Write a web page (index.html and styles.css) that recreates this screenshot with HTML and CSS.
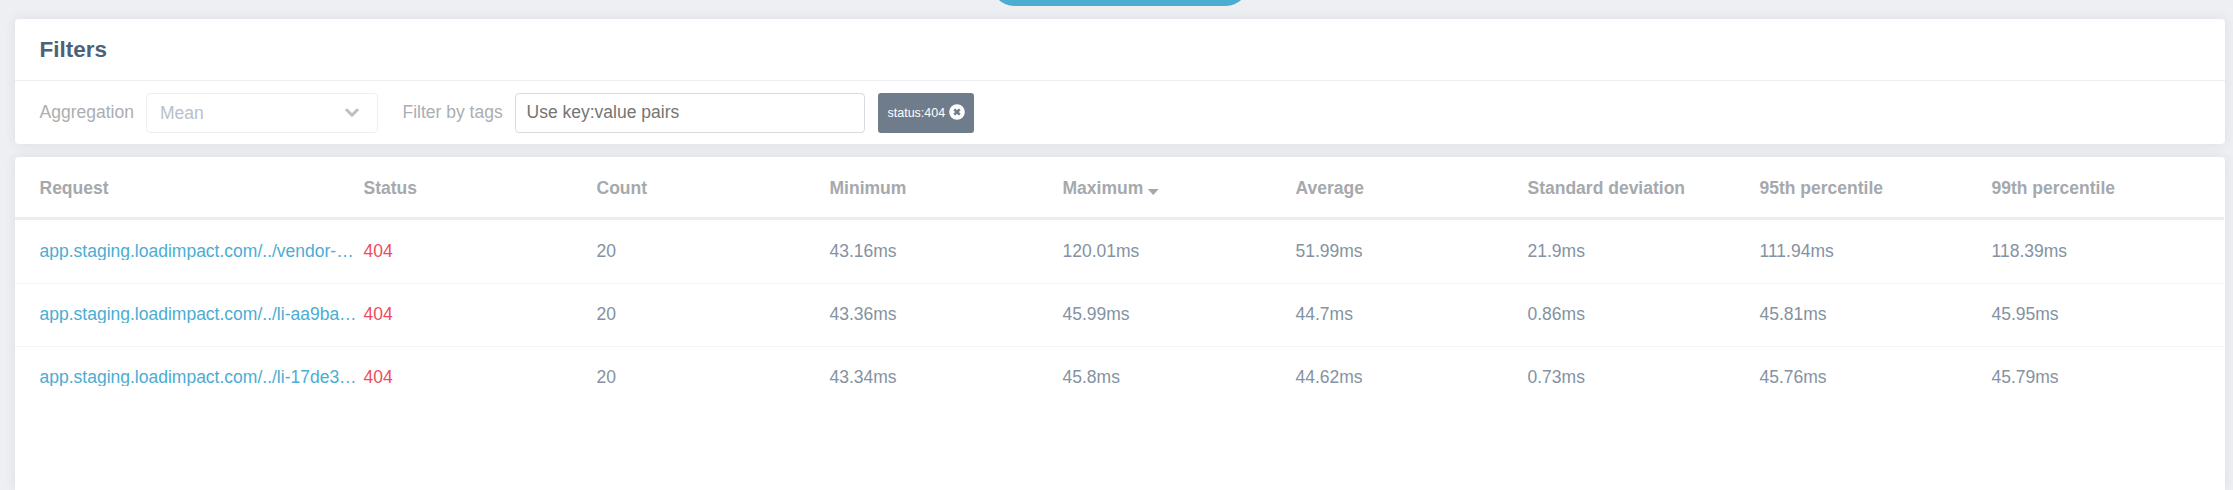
FILE: index.html
```html
<!DOCTYPE html>
<html lang="en">
<head>
<meta charset="utf-8">
<title>Requests</title>
<link rel="stylesheet" href="styles.css">
</head>
<body>
<div class="pill"></div>
<section class="card filters">
  <h2 class="title">Filters</h2>
  <div class="controls">
    <span class="label">Aggregation</span>
    <div class="select"><span>Mean</span>
      <svg class="chevron" width="15" height="10" viewBox="0 0 15 10"><path d="M1.800 2 7 7.200 12.200 2" fill="none" stroke="#b9c0c9" stroke-width="3" stroke-linecap="round"/></svg>
    </div>
    <span class="label tags">Filter by tags</span>
    <input class="input" type="text" placeholder="Use key:value pairs">
    <div class="chip"><span>status:404</span>
      <svg class="close" width="16" height="16" viewBox="0 0 16 16"><circle cx="8" cy="8" r="7.800" fill="#fff"/><path d="M5.300 5.300 10.700 10.700M10.700 5.300 5.300 10.700" stroke="#6e7c8c" stroke-width="2.600"/></svg>
    </div>
  </div>
</section>
<section class="card results">
  <div class="row head"><span>Request</span><span>Status</span><span>Count</span><span>Minimum</span><span>Maximum<i class="caret"></i></span><span>Average</span><span>Standard deviation</span><span>95th percentile</span><span>99th percentile</span></div>
  <div class="row"><a class="link">app.staging.loadimpact.com/../vendor-…</a><span class="error">404</span><span>20</span><span>43.16ms</span><span>120.01ms</span><span>51.99ms</span><span>21.9ms</span><span>111.94ms</span><span>118.39ms</span></div>
  <div class="row"><a class="link">app.staging.loadimpact.com/../li-aa9ba…</a><span class="error">404</span><span>20</span><span>43.36ms</span><span>45.99ms</span><span>44.7ms</span><span>0.86ms</span><span>45.81ms</span><span>45.95ms</span></div>
  <div class="row"><a class="link">app.staging.loadimpact.com/../li-17de3…</a><span class="error">404</span><span>20</span><span>43.34ms</span><span>45.8ms</span><span>44.62ms</span><span>0.73ms</span><span>45.76ms</span><span>45.79ms</span></div>
</section>
</body>
</html>
```
FILE: styles.css
```css
* { box-sizing: border-box; }
body {
  margin: 0;
  height: 490px;
  padding: 0 8px 0 15px;
  overflow: hidden;
  display: flex;
  flex-direction: column;
  background: #eeeff3;
  color: #8492a1;
  font: 17.5px/20px "Liberation Sans", Arial, sans-serif;
}
.pill {
  flex: none;
  width: 256px;
  height: 50px;
  margin: -44px 0 13px 976.5px;
  border-radius: 22px;
  background: #4badd1;
}
.card {
  flex: none;
  background: #fff;
  border-radius: 4px;
  box-shadow: 0 0 12px rgba(50, 60, 80, 0.09);
}
.filters { height: 125px; margin-bottom: 13px; }
.title {
  height: 62px;
  margin: 0;
  padding: 0 24.5px;
  border-bottom: 1px solid #ecedf2;
  color: #4e6177;
  font-size: 22.5px;
  line-height: 61px;
}
.controls {
  display: flex;
  align-items: center;
  height: 63px;
  padding: 1px 24.5px 0;
}
.label { width: 106.5px; margin-bottom: 2px; color: #abaeb2; }
.tags { width: 112.5px; margin-left: 24.5px; }
.select {
  display: flex;
  align-items: center;
  justify-content: space-between;
  width: 232px;
  height: 40px;
  padding: 0 17.5px 0 13px;
  border: 1px solid #eeeff1;
  border-radius: 4px;
  color: #b9c0c9;
}
.input {
  width: 350px;
  height: 40px;
  padding: 0 10.5px 2px;
  border: 1px solid #d8dade;
  border-radius: 4px;
  background: #fff;
  font: inherit;
}
.input::placeholder { color: #757575; opacity: 1; }
.chip {
  display: flex;
  align-items: center;
  justify-content: space-between;
  width: 96px;
  height: 40px;
  margin-left: 13px;
  padding: 0 9px 0 9.5px;
  border-radius: 3px;
  background: #6e7c8c;
  color: #fff;
  font-size: 12.5px;
}
.close { margin-bottom: 3px; }
.results {
  flex: 1;
  border-radius: 4px 4px 0 0;
}
.row {
  display: grid;
  grid-template-columns: 324px 233px 233px 233px 233px 232px 232px 232px 1fr;
  align-items: start;
  height: 63px;
  margin-right: 1px;
  padding: 20px 0 0 24.5px;
  border-top: 1px solid #f2f3f5;
}
.head,
.head + .row { border-top-color: transparent; }
.head {
  border-bottom: 3px solid #ecedf2;
  color: #a5a9ad;
  font-weight: bold;
}
.link {
  width: 318px;
  margin-top: 1px;
  overflow: hidden;
  white-space: nowrap;
  color: #4badd1;
  line-height: 18px;
}
.error { color: #ed4c5c; }
.caret {
  display: inline-block;
  width: 11px;
  height: 6px;
  margin-left: 4.5px;
  background: #a5a9ad;
  clip-path: polygon(0 0, 100% 0, 50% 100%);
  vertical-align: -1px;
}
```
